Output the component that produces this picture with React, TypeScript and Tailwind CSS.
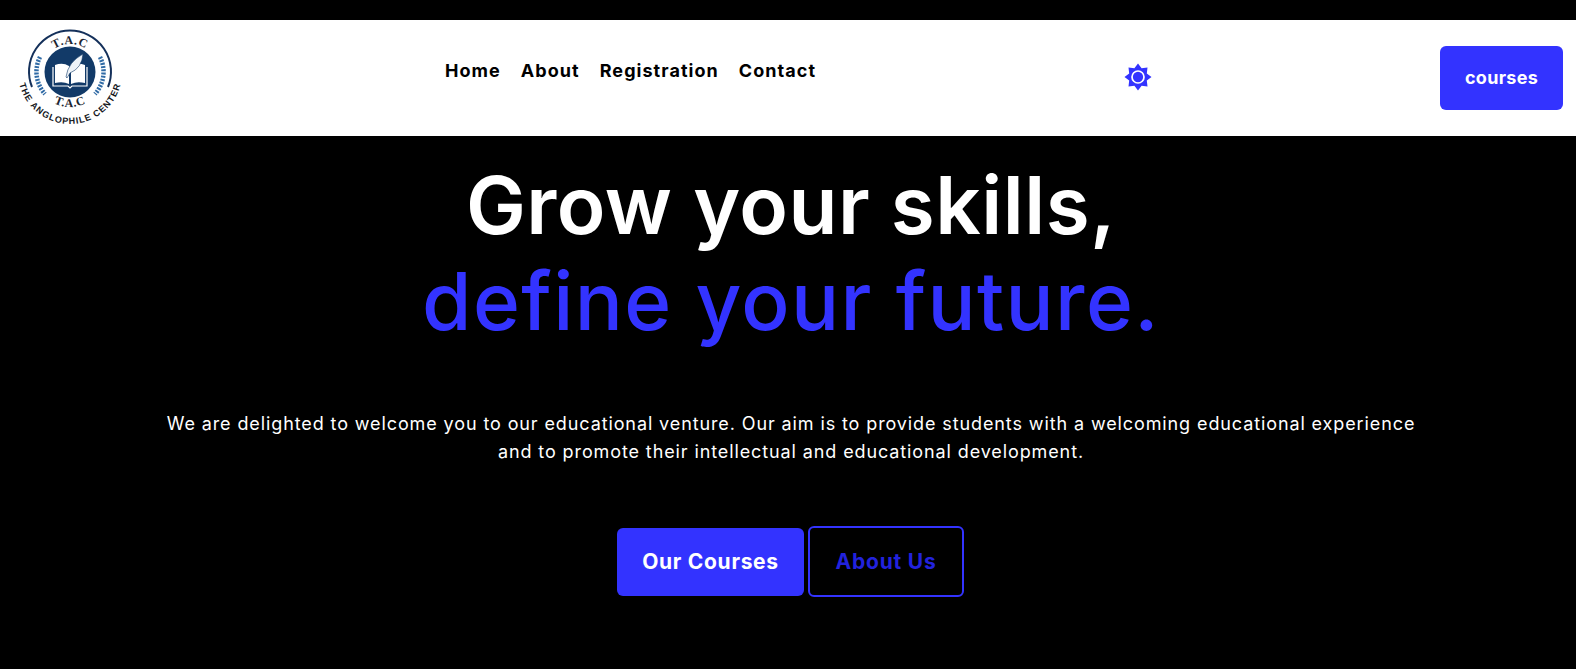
import { useState } from "react";

const Logo = () => (
  <svg viewBox="0 0 108 116" className="h-[116px] w-[108px] shrink-0">
    <defs>
      <path id="topArc" d="M 26 52 A 28 28 0 0 1 82 52" />
      <path id="botArc" d="M 19 52 A 35 35 0 0 0 89 52" />
      <path id="nameArc" d="M 2 52 A 52 52 0 0 0 106 52" />
    </defs>
    <path d="M 16 67 A 41 41 0 1 1 92 67" fill="none" stroke="#14305a" strokeWidth="2" />
    <circle cx="54" cy="52" r="25.5" fill="#123a68" />
    <text fontSize="12" fontFamily="Liberation Serif, serif" fontWeight="700" fill="#1b2430" letterSpacing="0.6">
      <textPath href="#topArc" startOffset="50%" textAnchor="middle">
        T.A.C
      </textPath>
    </text>
    <text fontSize="12" fontFamily="Liberation Serif, serif" fontWeight="700" fill="#1b2430" letterSpacing="0.6">
      <textPath href="#botArc" startOffset="50%" textAnchor="middle">
        T.A.C
      </textPath>
    </text>
    <path d="M39 45 Q47 42 53 46 V64 Q47 61 39 63Z" fill="#fff" />
    <path d="M55 46 Q61 42 69 45 V63 Q61 61 55 64Z" fill="#fff" />
    <path d="M37 47 V66 H52 L54 68 L56 66 H71 V47" fill="none" stroke="#fff" strokeWidth="1.2" />
    <path d="M50 57 Q52 42 67 34 Q66 48 54 53 L51 58Z" fill="#eef3f8" stroke="#123a68" strokeWidth="0.6" />
    <path d="M24 37 A33 33 0 0 0 29 74" fill="none" stroke="#2f6aa5" strokeWidth="4.5" strokeDasharray="2 1.2" />
    <path d="M84 37 A33 33 0 0 1 79 74" fill="none" stroke="#2f6aa5" strokeWidth="4.5" strokeDasharray="2 1.2" />
    <text fontSize="9" fontFamily="Liberation Sans, sans-serif" fontWeight="700" fill="#15181d" letterSpacing="0.95">
      <textPath href="#nameArc" startOffset="50%" textAnchor="middle">
        THE ANGLOPHILE CENTER
      </textPath>
    </text>
  </svg>
);

const SunIcon = () => (
  <svg viewBox="0 0 28 28" className="h-7 w-7">
    <path
      fill="#3333ff"
      d="M14 0.5 L17.6 5.2 L23.5 4.5 L22.8 10.4 L27.5 14 L22.8 17.6 L23.5 23.5 L17.6 22.8 L14 27.5 L10.4 22.8 L4.5 23.5 L5.2 17.6 L0.5 14 L5.2 10.4 L4.5 4.5 L10.4 5.2 Z"
    />
    <circle cx="14" cy="14" r="6" fill="none" stroke="#fff" strokeWidth="1.7" />
  </svg>
);

const links = ["Home", "About", "Registration", "Contact"];

export default function App() {
  const [dark] = useState(true);

  return (
    <div
      className={`h-[669px] overflow-hidden pt-5 ${dark ? "bg-black" : "bg-white"}`}
      style={{ fontFamily: "Inter, 'Noto Sans', sans-serif" }}
    >
      <header className="flex h-[116px] items-center bg-white pl-4 pr-[13px]">
        <Logo />
        <nav className="ml-[321px] flex gap-5 self-start pt-[38px] text-[18px] font-bold leading-[26px] tracking-[1.05px] text-black">
          {links.map((l) => (
            <a key={l} href="#">
              {l}
            </a>
          ))}
        </nav>
        <div className="ml-[308px] mt-[-2px]">
          <SunIcon />
        </div>
        <button className="ml-auto h-16 w-[123px] rounded-md bg-[#3333ff] text-lg font-bold tracking-[0.3px] text-white">
          courses
        </button>
      </header>

      <main className="flex flex-col items-center pl-[6px]">
        <h1 className="mt-[21px] text-center text-[80px] font-semibold leading-[96px] tracking-[0.5px] text-white">
          Grow your skills,
          <br />
          <span className="font-medium tracking-[1.4px] text-[#3333ff]">define your future.</span>
        </h1>
        <p className="mt-[61px] w-[1270px] text-center text-lg leading-7 tracking-[0.89px] text-white">
          We are delighted to welcome you to our educational venture. Our aim is to provide students with a welcoming
          educational experience and to promote their intellectual and educational development.
        </p>
        <div className="ml-[-1px] mt-[60px] flex items-center gap-1">
          <button className="h-[68px] w-[187px] rounded-md bg-[#3333ff] text-[21px] font-bold tracking-[0.7px] text-white">
            Our Courses
          </button>
          <button className="h-[71px] w-[156px] rounded-md border-2 border-[#3333ff] text-[21px] font-bold tracking-[0.8px] text-[#2222dd]">
            About Us
          </button>
        </div>
      </main>
    </div>
  );
}
